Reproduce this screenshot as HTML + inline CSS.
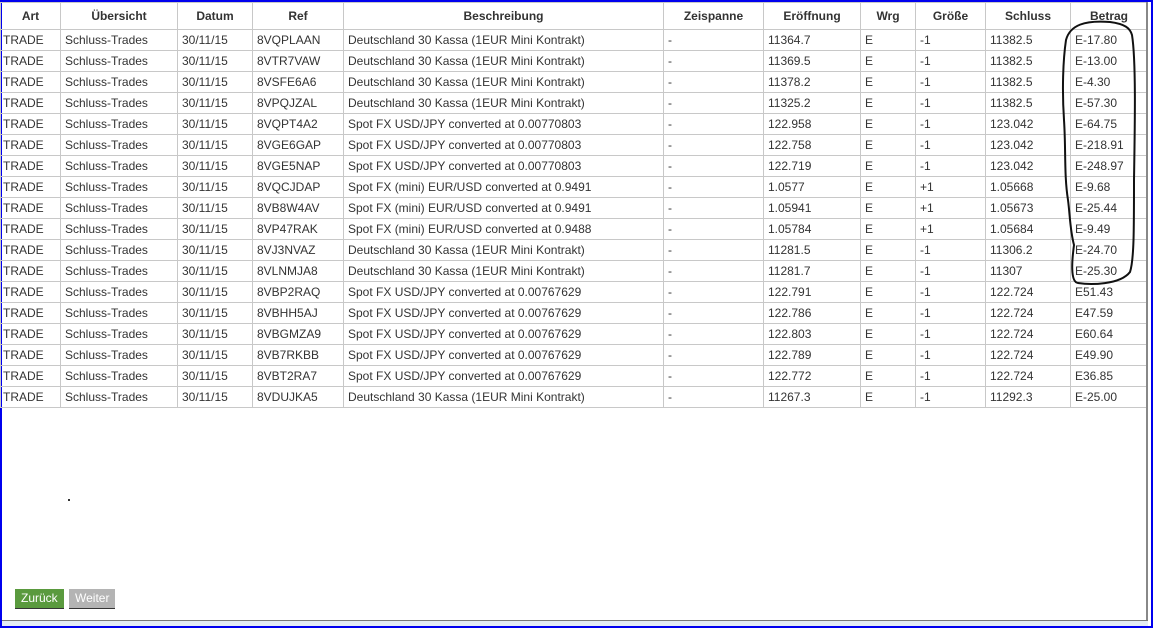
<!DOCTYPE html><html><head><style>
body{margin:0;width:1153px;height:628px;background:#fff;position:relative;overflow:hidden;font-family:"Liberation Sans",Arial,sans-serif;}
#frame{position:absolute;left:0;top:0;width:1149px;height:624px;border:2px solid #0000ee;border-top-width:2px;}
table{position:absolute;left:0;top:2px;border-collapse:collapse;table-layout:fixed;font-size:12px;color:#333;}
td,th{border:1px solid #c8c8c8;height:20px;padding:0 0 0 4px;white-space:nowrap;overflow:hidden;}
th{height:26px;font-weight:bold;color:#333;text-align:center;padding:0;}
td:first-child{padding-left:2px}
.btn{position:absolute;top:589px;height:20px;line-height:19px;font-size:12px;color:#fff;padding:0 6px;border-bottom:1px solid #333;box-sizing:border-box;}
</style></head><body>
<div id="frame"></div>
<table>
<colgroup><col style="width:60px"><col style="width:117px"><col style="width:75px"><col style="width:91px"><col style="width:320px"><col style="width:100px"><col style="width:97px"><col style="width:55px"><col style="width:70px"><col style="width:85px"><col style="width:77px"></colgroup>
<tr><th>Art</th><th>Übersicht</th><th>Datum</th><th>Ref</th><th>Beschreibung</th><th>Zeispanne</th><th>Eröffnung</th><th>Wrg</th><th>Größe</th><th>Schluss</th><th>Betrag</th></tr>
<tr><td>TRADE</td><td>Schluss-Trades</td><td>30/11/15</td><td>8VQPLAAN</td><td>Deutschland 30 Kassa (1EUR Mini Kontrakt)</td><td>-</td><td>11364.7</td><td>E</td><td>-1</td><td>11382.5</td><td>E-17.80</td></tr>
<tr><td>TRADE</td><td>Schluss-Trades</td><td>30/11/15</td><td>8VTR7VAW</td><td>Deutschland 30 Kassa (1EUR Mini Kontrakt)</td><td>-</td><td>11369.5</td><td>E</td><td>-1</td><td>11382.5</td><td>E-13.00</td></tr>
<tr><td>TRADE</td><td>Schluss-Trades</td><td>30/11/15</td><td>8VSFE6A6</td><td>Deutschland 30 Kassa (1EUR Mini Kontrakt)</td><td>-</td><td>11378.2</td><td>E</td><td>-1</td><td>11382.5</td><td>E-4.30</td></tr>
<tr><td>TRADE</td><td>Schluss-Trades</td><td>30/11/15</td><td>8VPQJZAL</td><td>Deutschland 30 Kassa (1EUR Mini Kontrakt)</td><td>-</td><td>11325.2</td><td>E</td><td>-1</td><td>11382.5</td><td>E-57.30</td></tr>
<tr><td>TRADE</td><td>Schluss-Trades</td><td>30/11/15</td><td>8VQPT4A2</td><td>Spot FX USD/JPY converted at 0.00770803</td><td>-</td><td>122.958</td><td>E</td><td>-1</td><td>123.042</td><td>E-64.75</td></tr>
<tr><td>TRADE</td><td>Schluss-Trades</td><td>30/11/15</td><td>8VGE6GAP</td><td>Spot FX USD/JPY converted at 0.00770803</td><td>-</td><td>122.758</td><td>E</td><td>-1</td><td>123.042</td><td>E-218.91</td></tr>
<tr><td>TRADE</td><td>Schluss-Trades</td><td>30/11/15</td><td>8VGE5NAP</td><td>Spot FX USD/JPY converted at 0.00770803</td><td>-</td><td>122.719</td><td>E</td><td>-1</td><td>123.042</td><td>E-248.97</td></tr>
<tr><td>TRADE</td><td>Schluss-Trades</td><td>30/11/15</td><td>8VQCJDAP</td><td>Spot FX (mini) EUR/USD converted at 0.9491</td><td>-</td><td>1.0577</td><td>E</td><td>+1</td><td>1.05668</td><td>E-9.68</td></tr>
<tr><td>TRADE</td><td>Schluss-Trades</td><td>30/11/15</td><td>8VB8W4AV</td><td>Spot FX (mini) EUR/USD converted at 0.9491</td><td>-</td><td>1.05941</td><td>E</td><td>+1</td><td>1.05673</td><td>E-25.44</td></tr>
<tr><td>TRADE</td><td>Schluss-Trades</td><td>30/11/15</td><td>8VP47RAK</td><td>Spot FX (mini) EUR/USD converted at 0.9488</td><td>-</td><td>1.05784</td><td>E</td><td>+1</td><td>1.05684</td><td>E-9.49</td></tr>
<tr><td>TRADE</td><td>Schluss-Trades</td><td>30/11/15</td><td>8VJ3NVAZ</td><td>Deutschland 30 Kassa (1EUR Mini Kontrakt)</td><td>-</td><td>11281.5</td><td>E</td><td>-1</td><td>11306.2</td><td>E-24.70</td></tr>
<tr><td>TRADE</td><td>Schluss-Trades</td><td>30/11/15</td><td>8VLNMJA8</td><td>Deutschland 30 Kassa (1EUR Mini Kontrakt)</td><td>-</td><td>11281.7</td><td>E</td><td>-1</td><td>11307</td><td>E-25.30</td></tr>
<tr><td>TRADE</td><td>Schluss-Trades</td><td>30/11/15</td><td>8VBP2RAQ</td><td>Spot FX USD/JPY converted at 0.00767629</td><td>-</td><td>122.791</td><td>E</td><td>-1</td><td>122.724</td><td>E51.43</td></tr>
<tr><td>TRADE</td><td>Schluss-Trades</td><td>30/11/15</td><td>8VBHH5AJ</td><td>Spot FX USD/JPY converted at 0.00767629</td><td>-</td><td>122.786</td><td>E</td><td>-1</td><td>122.724</td><td>E47.59</td></tr>
<tr><td>TRADE</td><td>Schluss-Trades</td><td>30/11/15</td><td>8VBGMZA9</td><td>Spot FX USD/JPY converted at 0.00767629</td><td>-</td><td>122.803</td><td>E</td><td>-1</td><td>122.724</td><td>E60.64</td></tr>
<tr><td>TRADE</td><td>Schluss-Trades</td><td>30/11/15</td><td>8VB7RKBB</td><td>Spot FX USD/JPY converted at 0.00767629</td><td>-</td><td>122.789</td><td>E</td><td>-1</td><td>122.724</td><td>E49.90</td></tr>
<tr><td>TRADE</td><td>Schluss-Trades</td><td>30/11/15</td><td>8VBT2RA7</td><td>Spot FX USD/JPY converted at 0.00767629</td><td>-</td><td>122.772</td><td>E</td><td>-1</td><td>122.724</td><td>E36.85</td></tr>
<tr><td>TRADE</td><td>Schluss-Trades</td><td>30/11/15</td><td>8VDUJKA5</td><td>Deutschland 30 Kassa (1EUR Mini Kontrakt)</td><td>-</td><td>11267.3</td><td>E</td><td>-1</td><td>11292.3</td><td>E-25.00</td></tr>
</table>
<div style="position:absolute;left:1146px;top:2px;width:2px;height:620px;background:#888"></div>
<div style="position:absolute;left:2px;top:620px;width:1146px;height:1px;background:#777"></div>
<div style="position:absolute;left:2px;top:621px;width:1146px;height:5px;background:#e4ecf4"></div>
<div style="position:absolute;left:68px;top:499px;width:2px;height:2px;background:#333"></div>
<div class="btn" style="left:15px;background:#5a9a3e;">Zurück</div>
<div class="btn" style="left:69px;background:#b4b4b4;">Weiter</div>
<svg style="position:absolute;left:0;top:0" width="1153" height="628"><path d="M1066 40 C1070 25 1085 20 1110 22 C1125 24 1130 28 1132 35 C1136 60 1135 120 1134 180 C1134 230 1134 260 1130 272 C1120 285 1090 285 1078 283 C1070 282 1072 260 1074 245 C1070 230 1070 215 1068 200 C1064 175 1066 150 1064 120 C1062 90 1063 60 1066 40 Z" fill="none" stroke="#111" stroke-width="2"/></svg>
</body></html>
